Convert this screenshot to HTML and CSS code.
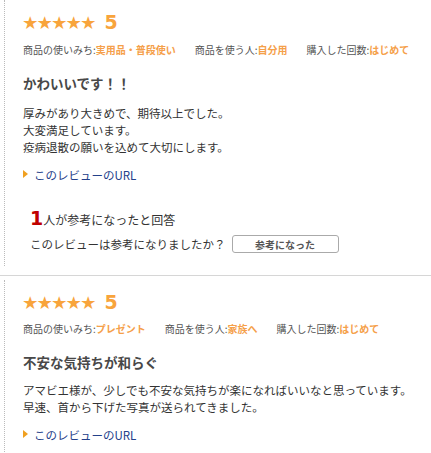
FILE: index.html
```html
<!DOCTYPE html>
<html lang="ja">
<head>
    <meta charset="UTF-8">
    <title>レビュー</title>
    <link rel="stylesheet" href="styles.css">
</head>
<body>
    <div class="review">
        <div class="rating">
            <span class="stars">★★★★★</span>
            <span class="score">5</span>
        </div>
        <div class="meta">
            <span class="meta-item">商品の使いみち:<b>実用品・普段使い</b></span>
            <span class="meta-item">商品を使う人:<b>自分用</b></span>
            <span class="meta-item">購入した回数:<b>はじめて</b></span>
        </div>
        <h2 class="title">かわいいです！！</h2>
        <p class="body">厚みがあり大きめで、期待以上でした。<br>大変満足しています。<br>疫病退散の願いを込めて大切にします。</p>
        <a class="url" href="#">このレビューのURL</a>
        <div class="helpful">
            <div class="count"><span class="num">1</span>人が参考になったと回答</div>
            <div class="ask">このレビューは参考になりましたか？<button class="vote">参考になった</button></div>
        </div>
    </div>

    <hr class="sep">

    <div class="review second">
        <div class="rating">
            <span class="stars">★★★★★</span>
            <span class="score">5</span>
        </div>
        <div class="meta">
            <span class="meta-item">商品の使いみち:<b>プレゼント</b></span>
            <span class="meta-item">商品を使う人:<b>家族へ</b></span>
            <span class="meta-item">購入した回数:<b>はじめて</b></span>
        </div>
        <h2 class="title">不安な気持ちが和らぐ</h2>
        <p class="body">アマビエ様が、少しでも不安な気持ちが楽になればいいなと思っています。<br>早速、首から下げた写真が送られてきました。</p>
        <a class="url" href="#">このレビューのURL</a>
    </div>
</body>
</html>
```

FILE: styles.css
```css
body {
    margin: 0;
    padding: 0;
    background: #fff;
    font-family: "Noto Sans CJK JP", sans-serif;
    color: #333;
}

.review {
    margin-left: 4px;
    border-left: 1px dotted #bbb;
    padding: 10px 0 13px 18px;
}

.review.second {
    margin-top: 4px;
    padding-bottom: 20px;
}

.rating {
    display: flex;
    align-items: center;
    height: 24px;
}

.stars {
    color: #f8a43c;
    font-size: 14.5px;
    line-height: 1;
}

.score {
    color: #f8a43c;
    font-family: "DejaVu Sans", sans-serif;
    font-weight: bold;
    font-size: 19px;
    margin-left: 9px;
    line-height: 1;
}

.meta {
    display: flex;
    gap: 19px;
    margin-top: 9px;
    font-size: 10px;
    line-height: 14px;
    color: #555;
}

.meta b {
    color: #f5a04a;
}

.title {
    margin: 16px 0 0;
    font-size: 13.5px;
    line-height: 20px;
    color: #484848;
}

.body {
    margin: 12px 0 0;
    font-size: 11.5px;
    line-height: 17px;
    color: #333;
}

.second .meta {
    margin-top: 8px;
}

.second .body {
    margin-top: 10px;
}

.url {
    display: flex;
    align-items: center;
    margin-top: 11px;
    font-size: 11.5px;
    line-height: 17px;
    color: #23408a;
    text-decoration: none;
}

.url::before {
    content: "";
    border-left: 5px solid #f0a020;
    border-top: 4px solid transparent;
    border-bottom: 4px solid transparent;
    margin-right: 6px;
    margin-top: -3px;
}

.helpful {
    padding-left: 7px;
    margin-top: 23px;
}

.count {
    font-size: 12px;
    line-height: 22px;
    color: #333;
}

.num {
    color: #bf0000;
    font-family: "DejaVu Sans", sans-serif;
    font-weight: bold;
    font-size: 19px;
}

.ask {
    display: flex;
    align-items: center;
    margin-top: 4px;
    font-size: 11.5px;
    line-height: 18px;
}

.vote {
    width: 107px;
    height: 18px;
    margin-left: 6px;
    padding: 0;
    background: #fff;
    border: 1px solid #aaa;
    border-radius: 3px;
    font-family: "Noto Sans CJK JP", sans-serif;
    font-size: 10px;
    font-weight: bold;
    color: #555;
}

.sep {
    margin: 9px 0 0;
    border: 0;
    border-top: 1px solid #d6d6d6;
}
```
